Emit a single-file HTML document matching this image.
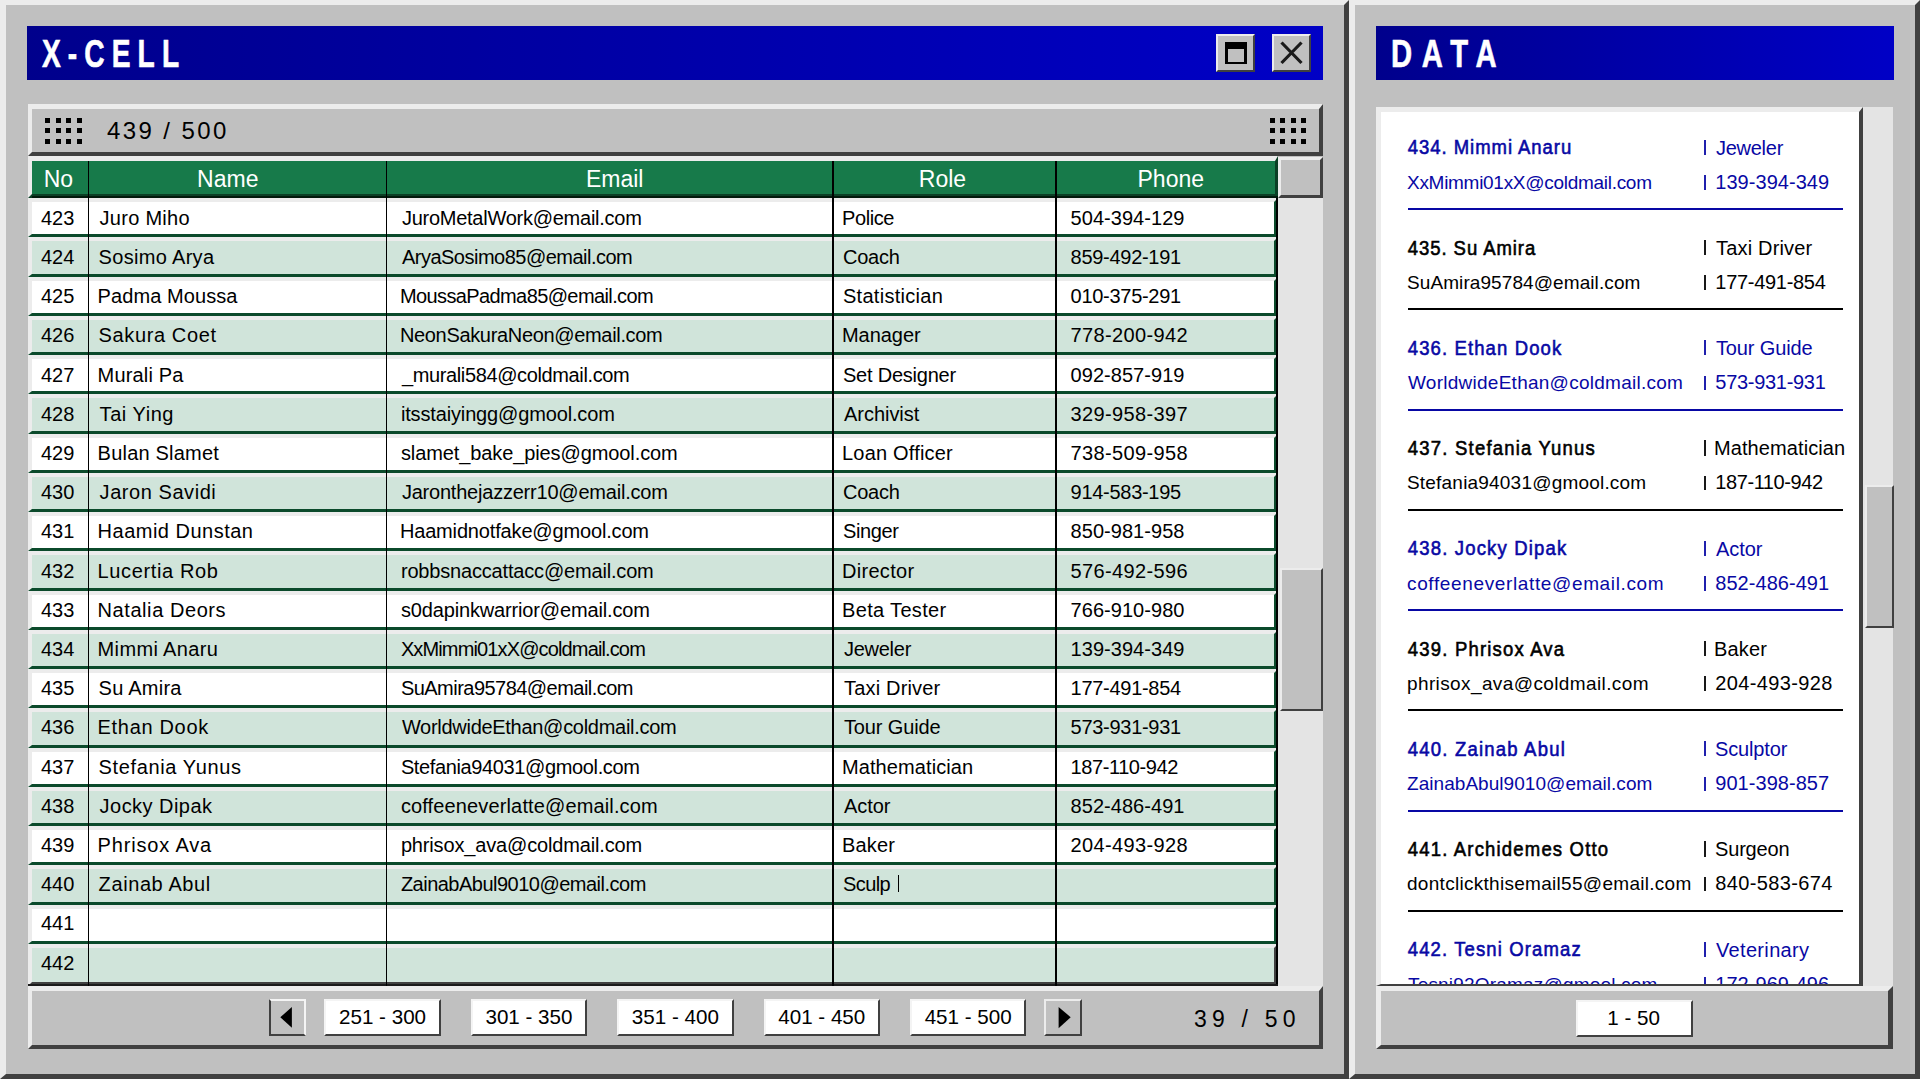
<!DOCTYPE html><html><head><meta charset="utf-8"><title>X-CELL</title><style>
*{margin:0;padding:0;box-sizing:border-box}
html,body{width:1920px;height:1079px;overflow:hidden;background:#c0c0c0;font-family:"Liberation Sans",sans-serif}
.a{position:absolute}
.t{position:absolute;white-space:pre;line-height:20px;height:20px}
.out{border-style:solid;border-top-color:#ececec;border-left-color:#ececec;border-right-color:#404040;border-bottom-color:#404040}
.tb{background:linear-gradient(to right,#00008c,#0000c6)}
.cell{font-size:20px;color:#000}
.row{position:absolute;left:0;width:1250px;height:39.25px;border-style:solid;border-width:4.7px 4.3px 3px 4.5px;border-color:#ececec #0b4a2b #0b4a2b #ececec}
.sep{position:absolute;width:1.6px;background:#000}
.btn{position:absolute;background:#fff;border-style:solid;border-width:2px 2.5px 2.5px 2px;border-color:#f4f4f4 #404040 #404040 #f4f4f4;font-size:20.6px;text-align:center}
.dot{position:absolute;width:5px;height:5px;background:#000}
</style></head><body>
<div class="a out" style="left:0;top:0;width:1349px;height:1079px;border-width:5px;border-left-width:6px;background:#c0c0c0"></div>
<div class="a tb" style="left:27px;top:26px;width:1296px;height:54px"></div>
<div class="t" style="left:42px;top:39px;font-size:38px;font-weight:bold;color:#fff;letter-spacing:9.6px;line-height:30px;height:30px;-webkit-text-stroke:0.6px #fff;transform:scaleX(0.74);transform-origin:0 0">X-CELL</div>
<div class="a out" style="left:1216px;top:34px;width:39px;height:38px;border-width:2px;background:#c0c0c0"></div>
<div class="a" style="left:1224.5px;top:42px;width:22.5px;height:22px;border:3px solid #000;border-top-width:7px;border-bottom-width:2.5px"></div>
<div class="a out" style="left:1272px;top:34px;width:39px;height:38px;border-width:2px;background:#c0c0c0"></div>
<svg class="a" style="left:1272px;top:34px" width="39" height="38"><path d="M9.5 8.5 L29.5 29 M29.5 8.5 L9.5 29" stroke="#1a1a1a" stroke-width="3.2" fill="none"/></svg>
<div class="a out" style="left:28px;top:104px;width:1295px;height:52px;border-width:5px 4px 4px 4px;background:#c0c0c0"></div>
<div class="dot" style="left:45px;top:118px"></div>
<div class="dot" style="left:56px;top:118px"></div>
<div class="dot" style="left:66px;top:118px"></div>
<div class="dot" style="left:77px;top:118px"></div>
<div class="dot" style="left:45px;top:128px"></div>
<div class="dot" style="left:56px;top:128px"></div>
<div class="dot" style="left:66px;top:128px"></div>
<div class="dot" style="left:77px;top:128px"></div>
<div class="dot" style="left:45px;top:139px"></div>
<div class="dot" style="left:56px;top:139px"></div>
<div class="dot" style="left:66px;top:139px"></div>
<div class="dot" style="left:77px;top:139px"></div>
<div class="dot" style="left:1270px;top:118px"></div>
<div class="dot" style="left:1280px;top:118px"></div>
<div class="dot" style="left:1291px;top:118px"></div>
<div class="dot" style="left:1301px;top:118px"></div>
<div class="dot" style="left:1270px;top:128px"></div>
<div class="dot" style="left:1280px;top:128px"></div>
<div class="dot" style="left:1291px;top:128px"></div>
<div class="dot" style="left:1301px;top:128px"></div>
<div class="dot" style="left:1270px;top:139px"></div>
<div class="dot" style="left:1280px;top:139px"></div>
<div class="dot" style="left:1291px;top:139px"></div>
<div class="dot" style="left:1301px;top:139px"></div>
<div class="t" style="left:107px;top:120px;font-size:24px;letter-spacing:2.4px;line-height:22px;height:22px;color:#000">439 / 500</div>
<div class="a" style="left:28px;top:156px;width:1250px;height:41.5px;border-style:solid;border-width:5px 3.5px 4.5px 4px;border-color:#ececec #0b3f25 #0b3f25 #ececec;background:#177a4a"></div>
<div class="t" style="left:-41.6px;width:200px;text-align:center;top:166.5px;font-size:23px;line-height:24px;height:24px;color:#fff">No</div>
<div class="t" style="left:127.80000000000001px;width:200px;text-align:center;top:166.5px;font-size:23px;line-height:24px;height:24px;color:#fff">Name</div>
<div class="t" style="left:514.7px;width:200px;text-align:center;top:166.5px;font-size:23px;line-height:24px;height:24px;color:#fff">Email</div>
<div class="t" style="left:842.5px;width:200px;text-align:center;top:166.5px;font-size:23px;line-height:24px;height:24px;color:#fff">Role</div>
<div class="t" style="left:1070.8px;width:200px;text-align:center;top:166.5px;font-size:23px;line-height:24px;height:24px;color:#fff">Phone</div>
<div class="a out" style="left:1278px;top:157px;width:45px;height:40.5px;border-width:3px;background:#c0c0c0"></div>
<div class="a" style="left:1278px;top:197.5px;width:45px;height:789.5px;background:#e4e4e4"></div>
<div class="a out" style="left:1280px;top:568px;width:43px;height:142.5px;border-width:2px 2.5px 2.5px 2px;background:#c0c0c0"></div>
<div class="a" style="left:28px;top:197.5px;width:1250px;height:788.1px;overflow:hidden">
<div class="row" style="top:0.50px;background:#fff"></div>
<div class="row" style="top:39.75px;background:#d0e4da"></div>
<div class="row" style="top:79.00px;background:#fff"></div>
<div class="row" style="top:118.25px;background:#d0e4da"></div>
<div class="row" style="top:157.50px;background:#fff"></div>
<div class="row" style="top:196.75px;background:#d0e4da"></div>
<div class="row" style="top:236.00px;background:#fff"></div>
<div class="row" style="top:275.25px;background:#d0e4da"></div>
<div class="row" style="top:314.50px;background:#fff"></div>
<div class="row" style="top:353.75px;background:#d0e4da"></div>
<div class="row" style="top:393.00px;background:#fff"></div>
<div class="row" style="top:432.25px;background:#d0e4da"></div>
<div class="row" style="top:471.50px;background:#fff"></div>
<div class="row" style="top:510.75px;background:#d0e4da"></div>
<div class="row" style="top:550.00px;background:#fff"></div>
<div class="row" style="top:589.25px;background:#d0e4da"></div>
<div class="row" style="top:628.50px;background:#fff"></div>
<div class="row" style="top:667.75px;background:#d0e4da"></div>
<div class="row" style="top:707.00px;background:#fff"></div>
<div class="row" style="top:746.25px;background:#d0e4da;height:41.85000000000002px;border-bottom-width:4.8px;border-color:#ececec #404040 #404040 #ececec"></div>
</div>
<div class="t cell" style="left:27.700000000000003px;width:60px;text-align:center;top:207.90px">423</div>
<div class="t cell" style="left:99.60px;top:207.90px;letter-spacing:0.275px">Juro Miho</div>
<div class="t cell" style="left:401.90px;top:207.90px;letter-spacing:-0.255px">JuroMetalWork@email.com</div>
<div class="t cell" style="left:842.00px;top:207.90px;letter-spacing:-0.400px">Police</div>
<div class="t cell" style="left:1070.60px;top:207.90px;letter-spacing:0.040px">504-394-129</div>
<div class="t cell" style="left:27.700000000000003px;width:60px;text-align:center;top:247.09px">424</div>
<div class="t cell" style="left:98.60px;top:247.09px;letter-spacing:0.320px">Sosimo Arya</div>
<div class="t cell" style="left:401.90px;top:247.09px;letter-spacing:-0.505px">AryaSosimo85@email.com</div>
<div class="t cell" style="left:843.00px;top:247.09px;letter-spacing:-0.250px">Coach</div>
<div class="t cell" style="left:1070.60px;top:247.09px;letter-spacing:-0.290px">859-492-191</div>
<div class="t cell" style="left:27.700000000000003px;width:60px;text-align:center;top:286.28px">425</div>
<div class="t cell" style="left:97.60px;top:286.28px;letter-spacing:0.082px">Padma Moussa</div>
<div class="t cell" style="left:399.90px;top:286.28px;letter-spacing:-0.605px">MoussaPadma85@email.com</div>
<div class="t cell" style="left:843.00px;top:286.28px;letter-spacing:0.282px">Statistician</div>
<div class="t cell" style="left:1070.60px;top:286.28px;letter-spacing:-0.290px">010-375-291</div>
<div class="t cell" style="left:27.700000000000003px;width:60px;text-align:center;top:325.47px">426</div>
<div class="t cell" style="left:98.60px;top:325.47px;letter-spacing:0.620px">Sakura Coet</div>
<div class="t cell" style="left:399.90px;top:325.47px;letter-spacing:-0.330px">NeonSakuraNeon@email.com</div>
<div class="t cell" style="left:842.00px;top:325.47px;letter-spacing:-0.050px">Manager</div>
<div class="t cell" style="left:1070.60px;top:325.47px;letter-spacing:0.370px">778-200-942</div>
<div class="t cell" style="left:27.700000000000003px;width:60px;text-align:center;top:364.66px">427</div>
<div class="t cell" style="left:97.60px;top:364.66px;letter-spacing:0.175px">Murali Pa</div>
<div class="t cell" style="left:401.90px;top:364.66px;letter-spacing:-0.368px">_murali584@coldmail.com</div>
<div class="t cell" style="left:843.00px;top:364.66px;letter-spacing:-0.227px">Set Designer</div>
<div class="t cell" style="left:1070.60px;top:364.66px;letter-spacing:0.040px">092-857-919</div>
<div class="t cell" style="left:27.700000000000003px;width:60px;text-align:center;top:403.85px">428</div>
<div class="t cell" style="left:99.60px;top:403.85px;letter-spacing:0.543px">Tai Ying</div>
<div class="t cell" style="left:400.90px;top:403.85px;letter-spacing:-0.148px">itsstaiyingg@gmool.com</div>
<div class="t cell" style="left:844.00px;top:403.85px;letter-spacing:-0.037px">Archivist</div>
<div class="t cell" style="left:1070.60px;top:403.85px;letter-spacing:0.370px">329-958-397</div>
<div class="t cell" style="left:27.700000000000003px;width:60px;text-align:center;top:443.04px">429</div>
<div class="t cell" style="left:97.60px;top:443.04px;letter-spacing:0.209px">Bulan Slamet</div>
<div class="t cell" style="left:400.90px;top:443.04px;letter-spacing:-0.100px">slamet_bake_pies@gmool.com</div>
<div class="t cell" style="left:842.00px;top:443.04px;letter-spacing:0.191px">Loan Officer</div>
<div class="t cell" style="left:1070.60px;top:443.04px;letter-spacing:0.370px">738-509-958</div>
<div class="t cell" style="left:27.700000000000003px;width:60px;text-align:center;top:482.23px">430</div>
<div class="t cell" style="left:99.60px;top:482.23px;letter-spacing:0.555px">Jaron Savidi</div>
<div class="t cell" style="left:401.90px;top:482.23px;letter-spacing:-0.215px">Jaronthejazzerr10@email.com</div>
<div class="t cell" style="left:843.00px;top:482.23px;letter-spacing:-0.250px">Coach</div>
<div class="t cell" style="left:1070.60px;top:482.23px;letter-spacing:-0.290px">914-583-195</div>
<div class="t cell" style="left:27.700000000000003px;width:60px;text-align:center;top:521.42px">431</div>
<div class="t cell" style="left:97.60px;top:521.42px;letter-spacing:0.492px">Haamid Dunstan</div>
<div class="t cell" style="left:399.90px;top:521.42px;letter-spacing:-0.159px">Haamidnotfake@gmool.com</div>
<div class="t cell" style="left:843.00px;top:521.42px;letter-spacing:-0.400px">Singer</div>
<div class="t cell" style="left:1070.60px;top:521.42px;letter-spacing:0.040px">850-981-958</div>
<div class="t cell" style="left:27.700000000000003px;width:60px;text-align:center;top:560.61px">432</div>
<div class="t cell" style="left:97.60px;top:560.61px;letter-spacing:0.627px">Lucertia Rob</div>
<div class="t cell" style="left:400.90px;top:560.61px;letter-spacing:-0.175px">robbsnaccattacc@email.com</div>
<div class="t cell" style="left:842.00px;top:560.61px;letter-spacing:0.300px">Director</div>
<div class="t cell" style="left:1070.60px;top:560.61px;letter-spacing:0.370px">576-492-596</div>
<div class="t cell" style="left:27.700000000000003px;width:60px;text-align:center;top:599.80px">433</div>
<div class="t cell" style="left:97.60px;top:599.80px;letter-spacing:0.567px">Natalia Deors</div>
<div class="t cell" style="left:400.90px;top:599.80px;letter-spacing:-0.150px">s0dapinkwarrior@email.com</div>
<div class="t cell" style="left:842.00px;top:599.80px;letter-spacing:0.340px">Beta Tester</div>
<div class="t cell" style="left:1070.60px;top:599.80px;letter-spacing:0.040px">766-910-980</div>
<div class="t cell" style="left:27.700000000000003px;width:60px;text-align:center;top:638.99px">434</div>
<div class="t cell" style="left:97.60px;top:638.99px;letter-spacing:0.360px">Mimmi Anaru</div>
<div class="t cell" style="left:400.90px;top:638.99px;letter-spacing:-0.865px">XxMimmi01xX@coldmail.com</div>
<div class="t cell" style="left:844.00px;top:638.99px;letter-spacing:-0.267px">Jeweler</div>
<div class="t cell" style="left:1070.60px;top:638.99px;letter-spacing:0.040px">139-394-349</div>
<div class="t cell" style="left:27.700000000000003px;width:60px;text-align:center;top:678.18px">435</div>
<div class="t cell" style="left:98.60px;top:678.18px;letter-spacing:0.243px">Su Amira</div>
<div class="t cell" style="left:400.90px;top:678.18px;letter-spacing:-0.529px">SuAmira95784@email.com</div>
<div class="t cell" style="left:844.00px;top:678.18px;letter-spacing:0.180px">Taxi Driver</div>
<div class="t cell" style="left:1070.60px;top:678.18px;letter-spacing:-0.290px">177-491-854</div>
<div class="t cell" style="left:27.700000000000003px;width:60px;text-align:center;top:717.37px">436</div>
<div class="t cell" style="left:97.60px;top:717.37px;letter-spacing:0.678px">Ethan Dook</div>
<div class="t cell" style="left:401.90px;top:717.37px;letter-spacing:-0.288px">WorldwideEthan@coldmail.com</div>
<div class="t cell" style="left:844.00px;top:717.37px;letter-spacing:-0.133px">Tour Guide</div>
<div class="t cell" style="left:1070.60px;top:717.37px;letter-spacing:-0.290px">573-931-931</div>
<div class="t cell" style="left:27.700000000000003px;width:60px;text-align:center;top:756.56px">437</div>
<div class="t cell" style="left:98.60px;top:756.56px;letter-spacing:0.631px">Stefania Yunus</div>
<div class="t cell" style="left:400.90px;top:756.56px;letter-spacing:-0.368px">Stefania94031@gmool.com</div>
<div class="t cell" style="left:842.00px;top:756.56px;letter-spacing:0.092px">Mathematician</div>
<div class="t cell" style="left:1070.60px;top:756.56px;letter-spacing:-0.420px">187-110-942</div>
<div class="t cell" style="left:27.700000000000003px;width:60px;text-align:center;top:795.75px">438</div>
<div class="t cell" style="left:99.60px;top:795.75px;letter-spacing:0.460px">Jocky Dipak</div>
<div class="t cell" style="left:400.90px;top:795.75px;letter-spacing:0.136px">coffeeneverlatte@email.com</div>
<div class="t cell" style="left:844.00px;top:795.75px;letter-spacing:-0.075px">Actor</div>
<div class="t cell" style="left:1070.60px;top:795.75px;letter-spacing:0.040px">852-486-491</div>
<div class="t cell" style="left:27.700000000000003px;width:60px;text-align:center;top:834.94px">439</div>
<div class="t cell" style="left:97.60px;top:834.94px;letter-spacing:0.840px">Phrisox Ava</div>
<div class="t cell" style="left:400.90px;top:834.94px;letter-spacing:-0.157px">phrisox_ava@coldmail.com</div>
<div class="t cell" style="left:842.00px;top:834.94px;letter-spacing:0.175px">Baker</div>
<div class="t cell" style="left:1070.60px;top:834.94px;letter-spacing:0.370px">204-493-928</div>
<div class="t cell" style="left:27.700000000000003px;width:60px;text-align:center;top:874.13px">440</div>
<div class="t cell" style="left:98.60px;top:874.13px;letter-spacing:0.600px">Zainab Abul</div>
<div class="t cell" style="left:400.90px;top:874.13px;letter-spacing:-0.509px">ZainabAbul9010@email.com</div>
<div class="t cell" style="left:843.00px;top:874.13px;letter-spacing:-0.575px">Sculp</div>
<div class="t cell" style="left:27.700000000000003px;width:60px;text-align:center;top:913.32px">441</div>
<div class="t cell" style="left:27.700000000000003px;width:60px;text-align:center;top:952.51px">442</div>
<div class="a" style="left:897.5px;top:875.3px;width:1.5px;height:17px;background:#000"></div>
<div class="a" style="left:1276.3px;top:197.5px;width:1.7px;height:788px;background:#000"></div>
<div class="a" style="left:28px;top:984.4px;width:1250px;height:1.2px;background:#1a1a1a"></div>
<div class="a" style="left:32px;top:196px;width:1246px;height:1.5px;background:#021a0c"></div>
<div class="sep" style="left:87.5px;top:161px;height:824.6px"></div>
<div class="sep" style="left:385.5px;top:161px;height:824.6px"></div>
<div class="sep" style="left:832.3000000000001px;top:161px;height:824.6px"></div>
<div class="sep" style="left:1055.0px;top:161px;height:824.6px"></div>
<div class="a out" style="left:28px;top:986px;width:1295px;height:62.5px;border-width:5px 4px 4.5px 4px;background:#c0c0c0"></div>
<div class="a" style="left:269px;top:999px;width:37px;height:37px;border-style:solid;border-width:2px;border-color:#f4f4f4 #f4f4f4 #404040 #404040;background:#c0c0c0"></div>
<svg class="a" style="left:269px;top:999px" width="37" height="37"><path d="M11.3 18.3 L22.9 8 L22.9 28.8 Z" fill="#000"/></svg>
<div class="btn" style="left:324.3px;top:999px;width:116.5px;height:37px;line-height:32px">251 - 300</div>
<div class="btn" style="left:470.7px;top:999px;width:116.5px;height:37px;line-height:32px">301 - 350</div>
<div class="btn" style="left:617.1px;top:999px;width:116.5px;height:37px;line-height:32px">351 - 400</div>
<div class="btn" style="left:763.5px;top:999px;width:116.5px;height:37px;line-height:32px">401 - 450</div>
<div class="btn" style="left:909.9px;top:999px;width:116.5px;height:37px;line-height:32px">451 - 500</div>
<div class="a out" style="left:1044.3px;top:999px;width:38px;height:37px;border-width:2px 2.5px 2.5px 2px;background:#c0c0c0"></div>
<svg class="a" style="left:1044.3px;top:999px" width="38" height="37"><path d="M14.6 8 L26.7 18.3 L14.6 29.3 Z" fill="#000"/></svg>
<div class="t" style="left:1194px;top:1008px;font-size:23px;letter-spacing:5.2px;line-height:22px;height:22px;color:#000">39 / 50</div>
<div class="a out" style="left:1349px;top:0;width:571px;height:1079px;border-width:5px;border-left-width:6px;background:#c0c0c0"></div>
<div class="a tb" style="left:1376px;top:26px;width:518px;height:54px"></div>
<div class="t" style="left:1391px;top:39px;font-size:38px;font-weight:bold;color:#fff;letter-spacing:12.4px;line-height:30px;height:30px;-webkit-text-stroke:0.6px #fff;transform:scaleX(0.77);transform-origin:0 0">DATA</div>
<div class="a" style="left:1376px;top:107px;width:487px;height:878.6px;border-style:solid;border-width:5px 4px 2px 5px;border-color:#ececec #404040 #404040 #ececec;background:#fff;overflow:hidden">
<div class="t" style="left:26.80px;top:24.30px;font-size:18.5px;-webkit-text-stroke:0.55px #0808a4;color:#0808a4;letter-spacing:0.960px;transform:scaleY(1.12);transform-origin:0 0">434. Mimmi Anaru</div>
<div class="t" style="left:26.00px;top:60.50px;font-size:19px;color:#0808a4;letter-spacing:-0.287px">XxMimmi01xX@coldmail.com</div>
<div class="a" style="left:323px;top:27.50px;width:1.8px;height:15.3px;background:#0808a4;opacity:.9"></div>
<div class="a" style="left:323px;top:63.00px;width:1.8px;height:14.5px;background:#0808a4;opacity:.9"></div>
<div class="t" style="left:335.00px;top:25.50px;font-size:20px;color:#0808a4;letter-spacing:-0.267px">Jeweler</div>
<div class="t" style="left:334.30px;top:59.50px;font-size:20px;color:#0808a4;letter-spacing:0.040px">139-394-349</div>
<div class="a" style="left:27px;top:96.00px;width:435px;height:2px;background:#0808a4"></div>
<div class="t" style="left:26.80px;top:124.57px;font-size:18.5px;-webkit-text-stroke:0.55px #000;color:#000;letter-spacing:0.933px;transform:scaleY(1.12);transform-origin:0 0">435. Su Amira</div>
<div class="t" style="left:26.00px;top:160.77px;font-size:19px;color:#000;letter-spacing:0.086px">SuAmira95784@email.com</div>
<div class="a" style="left:323px;top:127.77px;width:1.8px;height:15.3px;background:#000;opacity:.9"></div>
<div class="a" style="left:323px;top:163.27px;width:1.8px;height:14.5px;background:#000;opacity:.9"></div>
<div class="t" style="left:335.00px;top:125.77px;font-size:20px;color:#000;letter-spacing:0.180px">Taxi Driver</div>
<div class="t" style="left:334.30px;top:159.77px;font-size:20px;color:#000;letter-spacing:-0.290px">177-491-854</div>
<div class="a" style="left:27px;top:196.27px;width:435px;height:2px;background:#000"></div>
<div class="t" style="left:26.80px;top:224.84px;font-size:18.5px;-webkit-text-stroke:0.55px #0808a4;color:#0808a4;letter-spacing:1.114px;transform:scaleY(1.12);transform-origin:0 0">436. Ethan Dook</div>
<div class="t" style="left:27.00px;top:261.04px;font-size:19px;color:#0808a4;letter-spacing:0.258px">WorldwideEthan@coldmail.com</div>
<div class="a" style="left:323px;top:228.04px;width:1.8px;height:15.3px;background:#0808a4;opacity:.9"></div>
<div class="a" style="left:323px;top:263.54px;width:1.8px;height:14.5px;background:#0808a4;opacity:.9"></div>
<div class="t" style="left:335.00px;top:226.04px;font-size:20px;color:#0808a4;letter-spacing:-0.133px">Tour Guide</div>
<div class="t" style="left:334.30px;top:260.04px;font-size:20px;color:#0808a4;letter-spacing:-0.290px">573-931-931</div>
<div class="a" style="left:27px;top:296.54px;width:435px;height:2px;background:#0808a4"></div>
<div class="t" style="left:26.80px;top:325.11px;font-size:18.5px;-webkit-text-stroke:0.55px #000;color:#000;letter-spacing:1.211px;transform:scaleY(1.12);transform-origin:0 0">437. Stefania Yunus</div>
<div class="t" style="left:26.00px;top:361.31px;font-size:19px;color:#000;letter-spacing:0.200px">Stefania94031@gmool.com</div>
<div class="a" style="left:323px;top:328.31px;width:1.8px;height:15.3px;background:#000;opacity:.9"></div>
<div class="a" style="left:323px;top:363.81px;width:1.8px;height:14.5px;background:#000;opacity:.9"></div>
<div class="t" style="left:333.00px;top:326.31px;font-size:20px;color:#000;letter-spacing:0.092px">Mathematician</div>
<div class="t" style="left:334.30px;top:360.31px;font-size:20px;color:#000;letter-spacing:-0.420px">187-110-942</div>
<div class="a" style="left:27px;top:396.81px;width:435px;height:2px;background:#000"></div>
<div class="t" style="left:26.80px;top:425.38px;font-size:18.5px;-webkit-text-stroke:0.55px #0808a4;color:#0808a4;letter-spacing:1.173px;transform:scaleY(1.12);transform-origin:0 0">438. Jocky Dipak</div>
<div class="t" style="left:26.00px;top:461.58px;font-size:19px;color:#0808a4;letter-spacing:0.636px">coffeeneverlatte@email.com</div>
<div class="a" style="left:323px;top:428.58px;width:1.8px;height:15.3px;background:#0808a4;opacity:.9"></div>
<div class="a" style="left:323px;top:464.08px;width:1.8px;height:14.5px;background:#0808a4;opacity:.9"></div>
<div class="t" style="left:335.00px;top:426.58px;font-size:20px;color:#0808a4;letter-spacing:-0.075px">Actor</div>
<div class="t" style="left:334.30px;top:460.58px;font-size:20px;color:#0808a4;letter-spacing:0.040px">852-486-491</div>
<div class="a" style="left:27px;top:497.08px;width:435px;height:2px;background:#0808a4"></div>
<div class="t" style="left:26.80px;top:525.65px;font-size:18.5px;-webkit-text-stroke:0.55px #000;color:#000;letter-spacing:1.187px;transform:scaleY(1.12);transform-origin:0 0">439. Phrisox Ava</div>
<div class="t" style="left:26.00px;top:561.85px;font-size:19px;color:#000;letter-spacing:0.387px">phrisox_ava@coldmail.com</div>
<div class="a" style="left:323px;top:528.85px;width:1.8px;height:15.3px;background:#000;opacity:.9"></div>
<div class="a" style="left:323px;top:564.35px;width:1.8px;height:14.5px;background:#000;opacity:.9"></div>
<div class="t" style="left:333.00px;top:526.85px;font-size:20px;color:#000;letter-spacing:0.175px">Baker</div>
<div class="t" style="left:334.30px;top:560.85px;font-size:20px;color:#000;letter-spacing:0.370px">204-493-928</div>
<div class="a" style="left:27px;top:597.35px;width:435px;height:2px;background:#000"></div>
<div class="t" style="left:26.80px;top:625.92px;font-size:18.5px;-webkit-text-stroke:0.55px #0808a4;color:#0808a4;letter-spacing:1.207px;transform:scaleY(1.12);transform-origin:0 0">440. Zainab Abul</div>
<div class="t" style="left:26.00px;top:662.12px;font-size:19px;color:#0808a4;letter-spacing:0.048px">ZainabAbul9010@email.com</div>
<div class="a" style="left:323px;top:629.12px;width:1.8px;height:15.3px;background:#0808a4;opacity:.9"></div>
<div class="a" style="left:323px;top:664.62px;width:1.8px;height:14.5px;background:#0808a4;opacity:.9"></div>
<div class="t" style="left:334.00px;top:627.12px;font-size:20px;color:#0808a4;letter-spacing:-0.143px">Sculptor</div>
<div class="t" style="left:334.30px;top:661.12px;font-size:20px;color:#0808a4;letter-spacing:0.040px">901-398-857</div>
<div class="a" style="left:27px;top:697.62px;width:435px;height:2px;background:#0808a4"></div>
<div class="t" style="left:26.80px;top:726.19px;font-size:18.5px;-webkit-text-stroke:0.55px #000;color:#000;letter-spacing:1.179px;transform:scaleY(1.12);transform-origin:0 0">441. Archidemes Otto</div>
<div class="t" style="left:26.00px;top:762.39px;font-size:19px;color:#000;letter-spacing:0.290px">dontclickthisemail55@email.com</div>
<div class="a" style="left:323px;top:729.39px;width:1.8px;height:15.3px;background:#000;opacity:.9"></div>
<div class="a" style="left:323px;top:764.89px;width:1.8px;height:14.5px;background:#000;opacity:.9"></div>
<div class="t" style="left:334.00px;top:727.39px;font-size:20px;color:#000;letter-spacing:-0.167px">Surgeon</div>
<div class="t" style="left:334.30px;top:761.39px;font-size:20px;color:#000;letter-spacing:0.370px">840-583-674</div>
<div class="a" style="left:27px;top:797.89px;width:435px;height:2px;background:#000"></div>
<div class="t" style="left:26.80px;top:826.46px;font-size:18.5px;-webkit-text-stroke:0.55px #0808a4;color:#0808a4;letter-spacing:1.119px;transform:scaleY(1.12);transform-origin:0 0">442. Tesni Oramaz</div>
<div class="t" style="left:27.00px;top:862.66px;font-size:19px;color:#0808a4;letter-spacing:0.182px">Tesni92Oramaz@gmool.com</div>
<div class="a" style="left:323px;top:829.66px;width:1.8px;height:15.3px;background:#0808a4;opacity:.9"></div>
<div class="a" style="left:323px;top:865.16px;width:1.8px;height:14.5px;background:#0808a4;opacity:.9"></div>
<div class="t" style="left:335.00px;top:827.66px;font-size:20px;color:#0808a4;letter-spacing:0.333px">Veterinary</div>
<div class="t" style="left:334.30px;top:861.66px;font-size:20px;color:#0808a4;letter-spacing:0.040px">172-969-496</div>
<div class="a" style="left:27px;top:898.16px;width:435px;height:2px;background:#0808a4"></div>
</div>
<div class="a" style="left:1863px;top:107px;width:30.4px;height:878.6px;background:#e4e4e4"></div>
<div class="a out" style="left:1864.5px;top:484.5px;width:29px;height:143px;border-width:2px 2.5px 2.5px 2px;background:#c0c0c0"></div>
<div class="a out" style="left:1376px;top:985.6px;width:517.4px;height:63px;border-width:5.2px 5.2px 4.2px 5px;background:#c0c0c0"></div>
<div class="btn" style="left:1576.3px;top:999.7px;width:116.6px;height:37px;line-height:32px;padding-right:2px">1 - 50</div>
</body></html>
